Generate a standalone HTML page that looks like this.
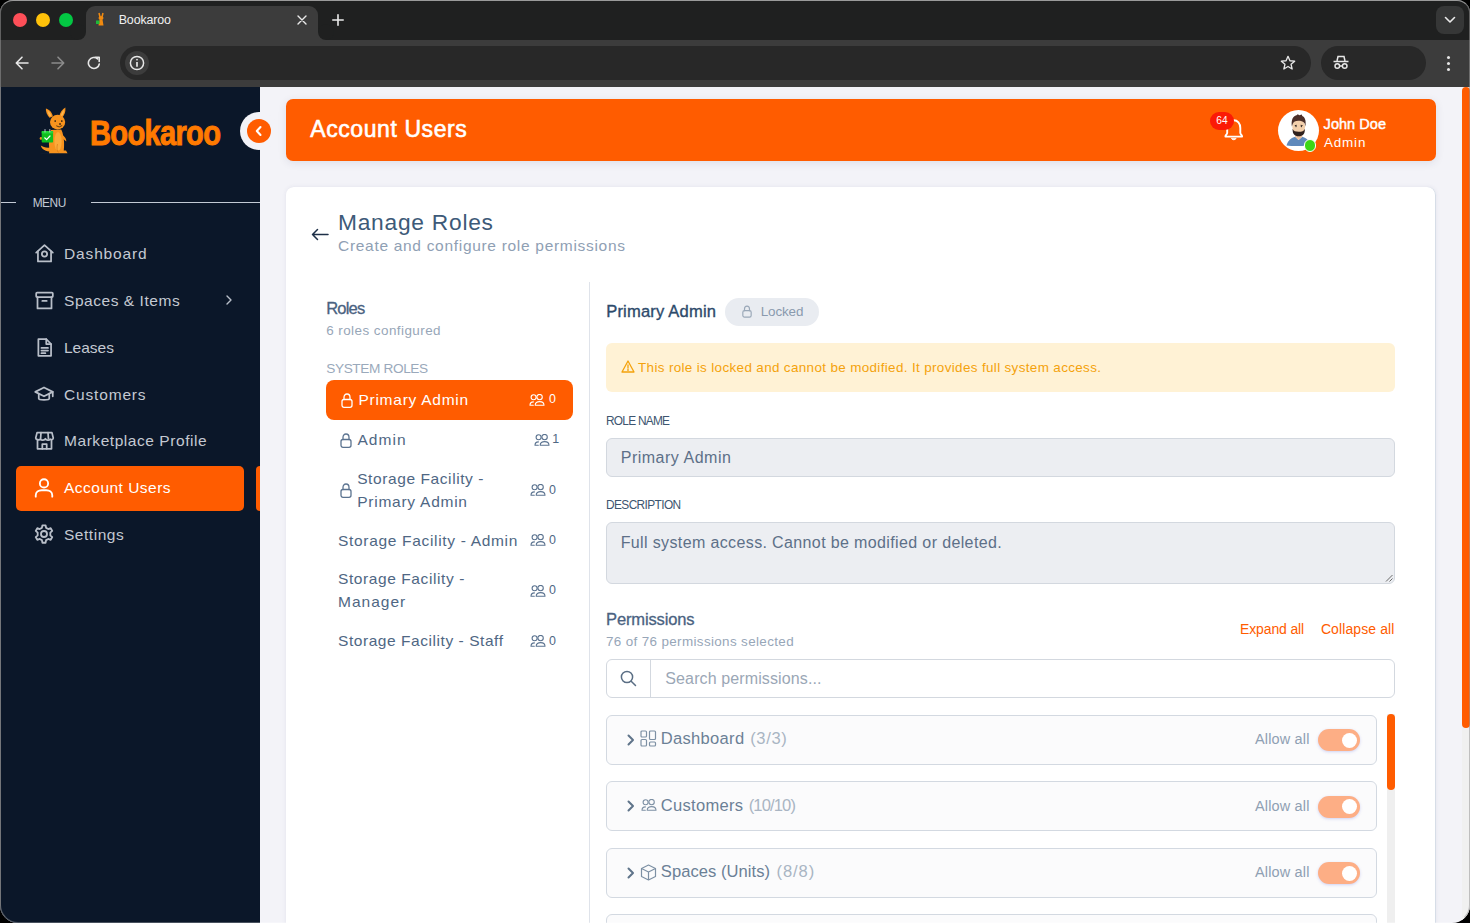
<!DOCTYPE html>
<html><head><meta charset="utf-8"><title>Bookaroo</title>
<style>
*{margin:0;padding:0;box-sizing:border-box}
html,body{width:1470px;height:923px;overflow:hidden;background:#000;font-family:"Liberation Sans",sans-serif}
#win{position:absolute;left:0;top:0;width:1470px;height:923px;overflow:hidden;border-radius:13px 13px 18px 18px;background:#f3f3f8}
#frame{position:absolute;left:0;top:0;width:1470px;height:923px;border-radius:13px 13px 18px 18px;border:1px solid rgba(150,150,150,0.55);border-top-color:rgba(170,170,170,0.8);border-bottom-color:rgba(255,255,255,0.25);pointer-events:none}
.a{position:absolute}
.t{position:absolute;white-space:pre;font-family:"Liberation Sans",sans-serif}
</style></head><body><div id="win">
<!-- ===== browser chrome ===== -->
<div class="a" style="left:0;top:0;width:1470px;height:40px;background:#1f2020"></div>
<div class="a" style="left:0;top:0;width:1470px;height:1px;background:#5b5b5b"></div>
<div class="a" style="left:0;top:40px;width:1470px;height:47px;background:#3c3c3c"></div>
<div class="a" style="left:86px;top:6px;width:232px;height:35px;background:#3c3c3c;border-radius:9px 9px 0 0"></div>
<div class="a" style="left:78px;top:32px;width:8px;height:8px;background:#3c3c3c"></div>
<div class="a" style="left:70px;top:24px;width:16px;height:16px;background:#1f2020;border-radius:50%"></div>
<div class="a" style="left:318px;top:32px;width:8px;height:8px;background:#3c3c3c"></div>
<div class="a" style="left:318px;top:24px;width:16px;height:16px;background:#1f2020;border-radius:50%"></div>
<div class="a" style="left:13px;top:13px;width:14px;height:14px;border-radius:50%;background:#fe4f58"></div>
<div class="a" style="left:36px;top:13px;width:14px;height:14px;border-radius:50%;background:#ffc20a"></div>
<div class="a" style="left:59px;top:13px;width:14px;height:14px;border-radius:50%;background:#03c743"></div>
<!-- favicon -->
<svg class="a" style="left:95px;top:12px" width="12" height="15" viewBox="0 0 12 15"><path d="M4 1 L5 5 M8 1 L7 5" stroke="#f08a10" stroke-width="1.5"/><ellipse cx="6" cy="6" rx="2.5" ry="2" fill="#f08a10"/><path d="M4.5 7.5 L7.5 7.5 L8.5 13.5 L3.5 13.5 Z" fill="#f08a10"/><rect x="1" y="8.5" width="3.5" height="3.5" fill="#1eb83a"/></svg>
<svg class="a" style="left:297px;top:15px" width="10" height="10" viewBox="0 0 10 10" stroke="#eaeaea" stroke-width="1.4" stroke-linecap="round"><path d="M1 1 L9 9 M9 1 L1 9"/></svg>
<svg class="a" style="left:332px;top:14px" width="12" height="12" viewBox="0 0 12 12" stroke="#eaeaea" stroke-width="1.6" stroke-linecap="round"><path d="M6 0.8 V11.2 M0.8 6 H11.2"/></svg>
<div class="a" style="left:1436px;top:6px;width:28px;height:28px;border-radius:8px;background:#363737"></div>
<svg class="a" style="left:1444px;top:16px" width="12" height="8" viewBox="0 0 12 8" fill="none" stroke="#eaeaea" stroke-width="1.6" stroke-linecap="round" stroke-linejoin="round"><path d="M1.5 1.5 L6 6 L10.5 1.5"/></svg>
<!-- toolbar -->
<svg class="a" style="left:15px;top:56px" width="14" height="14" viewBox="0 0 14 14" fill="none" stroke="#e6e6e6" stroke-width="1.6" stroke-linecap="round" stroke-linejoin="round"><path d="M13 7 H1.5 M7 1.2 L1.3 7 L7 12.8"/></svg>
<svg class="a" style="left:51px;top:56px" width="14" height="14" viewBox="0 0 14 14" fill="none" stroke="#8a8a8a" stroke-width="1.6" stroke-linecap="round" stroke-linejoin="round"><path d="M1 7 H12.5 M7 1.2 L12.7 7 L7 12.8"/></svg>
<svg class="a" style="left:87px;top:56px" width="14" height="14" viewBox="0 0 14 14" fill="none" stroke="#e6e6e6" stroke-width="1.6" stroke-linecap="round" stroke-linejoin="round"><path d="M12.3 8 A5.5 5.5 0 1 1 10.6 2.9"/><path d="M8 1.3 H12.2 V5.5"/></svg>
<div class="a" style="left:120px;top:46px;width:1191px;height:34px;border-radius:17px;background:#282828"></div>
<div class="a" style="left:125px;top:50.5px;width:24px;height:24px;border-radius:50%;background:#3c3c3c"></div>
<svg class="a" style="left:129px;top:54.5px" width="16" height="16" viewBox="0 0 16 16" fill="none" stroke="#e6e6e6" stroke-width="1.5"><circle cx="8" cy="8" r="6.6"/><path d="M8 7 V11.8" stroke-width="1.7"/><circle cx="8" cy="4.7" r="0.5" fill="#e6e6e6" stroke-width="1"/></svg>
<svg class="a" style="left:1280px;top:55px" width="16" height="16" viewBox="0 0 24 24" fill="none" stroke="#e6e6e6" stroke-width="2" stroke-linejoin="round"><path d="M12 2 L14.9 8.6 L22 9.3 L16.6 14 L18.2 21 L12 17.3 L5.8 21 L7.4 14 L2 9.3 L9.1 8.6 Z"/></svg>
<div class="a" style="left:1321px;top:46px;width:105px;height:34px;border-radius:17px;background:#282828"></div>
<svg class="a" style="left:1333px;top:55px" width="16" height="15" viewBox="0 0 16 15" fill="none" stroke="#e6e6e6" stroke-width="1.5"><path d="M4 6 L5 1.5 H11 L12 6" fill="#282828"/><path d="M0.5 6.5 H15.5" stroke-width="1.6"/><circle cx="4.3" cy="11" r="2.3"/><circle cx="11.7" cy="11" r="2.3"/><path d="M6.6 11 H9.4"/></svg>
<div class="a" style="left:1446.5px;top:55.5px;width:3px;height:3px;border-radius:50%;background:#e6e6e6"></div>
<div class="a" style="left:1446.5px;top:61.5px;width:3px;height:3px;border-radius:50%;background:#e6e6e6"></div>
<div class="a" style="left:1446.5px;top:67.5px;width:3px;height:3px;border-radius:50%;background:#e6e6e6"></div>

<!-- ===== sidebar ===== -->
<div class="a" style="left:0;top:87px;width:260px;height:836px;background:#0b1729"></div>
<div class="a" style="left:0;top:87px;width:1px;height:836px;background:#4a4f58"></div>
<div class="a" style="left:1px;top:202px;width:15px;height:1px;background:#c3cad5"></div>
<div class="a" style="left:91px;top:202px;width:169px;height:1px;background:#c3cad5"></div>
<div class="a" style="left:16px;top:465.5px;width:228px;height:45px;border-radius:5px;background:#ff5c00"></div>
<div class="a" style="left:256px;top:465.5px;width:4px;height:45px;border-radius:4px 0 0 4px;background:#ff5c00"></div>

<svg class="a" style="left:34px;top:243px" width="21" height="21" viewBox="0 0 24 24" fill="none" stroke="#b9bfc9" stroke-width="2" stroke-linecap="round" stroke-linejoin="round"><path d="M2.5 11 L12 2.5 L21.5 11"/><path d="M4.5 9.5 V21 H19.5 V9.5"/><circle cx="12" cy="12.5" r="3"/></svg>
<svg class="a" style="left:34px;top:290px" width="21" height="21" viewBox="0 0 24 24" fill="none" stroke="#b9bfc9" stroke-width="2" stroke-linecap="round" stroke-linejoin="round"><rect x="2.5" y="3" width="19" height="5" rx="1"/><path d="M4 8 V21 H20 V8"/><path d="M9.5 12.5 H14.5"/></svg>
<svg class="a" style="left:226px;top:295px" width="6" height="10" viewBox="0 0 6 10" fill="none" stroke="#b9bfc9" stroke-width="1.4" stroke-linecap="round" stroke-linejoin="round"><path d="M1 1 L5 5 L1 9"/></svg>
<svg class="a" style="left:34px;top:337px" width="21" height="21" viewBox="0 0 24 24" fill="none" stroke="#b9bfc9" stroke-width="2" stroke-linecap="round" stroke-linejoin="round"><path d="M5 2.5 H14 L19.5 8 V21.5 H5 Z"/><path d="M14 2.5 V8 H19.5"/><path d="M8.5 12.5 H16 M8.5 15.5 H16 M8.5 18.5 H13"/></svg>
<svg class="a" style="left:33px;top:384px" width="22" height="21" viewBox="0 0 24 24" fill="none" stroke="#b9bfc9" stroke-width="2" stroke-linecap="round" stroke-linejoin="round"><path d="M12 4 L22 9 L12 14 L2 9 Z"/><path d="M6 11 V16.5 C6 18.5 18 18.5 18 16.5 V11"/><path d="M22 9 V14"/></svg>
<svg class="a" style="left:34px;top:430px" width="21" height="21" viewBox="0 0 24 24" fill="none" stroke="#b9bfc9" stroke-width="2" stroke-linecap="round" stroke-linejoin="round"><path d="M3.5 3 H20.5 L22 9 C22 11 19.5 11.5 18.5 10.5 C17.5 12 14 12 13 10 C12 12 8.5 12 7.5 10.5 C6 12 2 11 2 9 Z"/><path d="M4 11.5 V21.5 H20 V11.5"/><path d="M9.5 21.5 V16 H14.5 V21.5"/><path d="M8 3 L7.5 10 M16 3 L16.5 10"/></svg>
<svg class="a" style="left:33px;top:476px" width="22" height="23" viewBox="0 0 24 24" fill="none" stroke="#ffffff" stroke-width="2" stroke-linecap="round" stroke-linejoin="round"><circle cx="12" cy="7.5" r="4.5"/><path d="M3 22 V20.5 C3 17 6 15 9.5 15 H14.5 C18 15 21 17 21 20.5 V22"/></svg>
<svg class="a" style="left:33px;top:523px" width="22" height="22" viewBox="0 0 24 24" fill="none" stroke="#b9bfc9" stroke-width="2" stroke-linecap="round" stroke-linejoin="round"><path d="M10.3 2.5 H13.7 L14.3 5.3 L16.6 6.6 L19.3 5.7 L21 8.6 L18.9 10.5 V13.5 L21 15.4 L19.3 18.3 L16.6 17.4 L14.3 18.7 L13.7 21.5 H10.3 L9.7 18.7 L7.4 17.4 L4.7 18.3 L3 15.4 L5.1 13.5 V10.5 L3 8.6 L4.7 5.7 L7.4 6.6 L9.7 5.3 Z"/><circle cx="12" cy="12" r="3.3"/></svg>

<!-- logo -->
<svg class="a" style="left:38px;top:104px" width="32" height="52" viewBox="0 0 32 52">
<ellipse cx="17" cy="49.5" rx="15" ry="1" fill="#0d1a2e"/>
<path d="M7.9 4.5 C11.5 5.5 14.5 9 14.8 12.5 L11.5 13.8 C9 11 7.6 7.5 7.9 4.5 Z" fill="#f7931e"/>
<path d="M9.5 6.5 C11.5 8 13 10 13.2 12 L11.8 12.5 C10.5 10.5 9.6 8.5 9.5 6.5 Z" fill="#fdb850"/>
<path d="M27.4 3.5 C27.8 7.5 26.5 11 24.5 13.2 L21.3 12 C22 8.5 24.5 5 27.4 3.5 Z" fill="#f7931e"/>
<path d="M26.2 5.5 C26 8 25.2 10.5 24 12 L22.8 11.5 C23.5 9 24.5 7 26.2 5.5 Z" fill="#fdb850"/>
<path d="M13 26 C10.2 32 10.6 43 12 48.5 L25.5 48.5 C26.5 42 26.5 32 23.2 25.5 Z" fill="#f7931e"/>
<ellipse cx="20" cy="37.5" rx="3.6" ry="9.5" fill="#fcab3a"/>
<ellipse cx="19.6" cy="18.1" rx="7.6" ry="7.3" fill="#f7931e"/>
<path d="M24.5 31 C27 33 28.5 35 28.3 37.5 C27 36.5 25.5 35 24 33.8 Z" fill="#f7931e"/>
<path d="M12.5 43.5 C8 44 5 43 2.8 41.5 C3.8 45.5 8 47.5 13 47.8 Z" fill="#f7931e"/>
<path d="M11.5 46.5 H20.5 L22 49.3 H11 Z M20.5 46.5 H28 L29.5 49.3 H20 Z" fill="#f7931e"/>
<path d="M19.5 40 C18.5 44 19 47 20.5 48.5" stroke="#c86a10" stroke-width="0.5" fill="none"/>
<circle cx="17.2" cy="17" r="0.85" fill="#1a1410"/><circle cx="23.8" cy="17" r="0.85" fill="#1a1410"/>
<ellipse cx="22" cy="20" rx="1.1" ry="0.8" fill="#1a1410"/>
<path d="M18.3 21.8 Q21 24.2 24.2 21.5" stroke="#1a1410" stroke-width="0.7" fill="none"/>
<circle cx="3" cy="34.4" r="1.3" fill="#f7931e"/>
<rect x="3.7" y="27" width="11.4" height="11.6" rx="0.8" fill="#0fbf1f"/>
<rect x="3.7" y="27" width="11.4" height="2.6" rx="0.8" fill="#22d43a"/>
<path d="M7 25.5 V28 M11.8 25.5 V28" stroke="#c8d0d8" stroke-width="0.9" stroke-linecap="round"/>
<path d="M6.7 33.8 L8.6 35.6 L12 32" stroke="#fff" stroke-width="1.2" fill="none" stroke-linecap="round" stroke-linejoin="round"/>
</svg>
<div class="t" style="left:89.5px;top:113.4px;font-size:35px;line-height:40px;font-weight:700;color:#ff7a00;letter-spacing:-0.8px;transform-origin:0 0;transform:scaleX(0.83);-webkit-text-stroke:1px #ff7a00">Bookaroo</div>

<!-- ===== header ===== -->
<div class="a" style="left:286px;top:99px;width:1150px;height:61.5px;border-radius:7px;background:#ff5c00;box-shadow:0 2px 8px rgba(40,50,90,0.10)"></div>
<svg class="a" style="left:1222px;top:116px" width="24" height="25" viewBox="0 0 24 25" fill="none" stroke="#fff" stroke-width="1.9" stroke-linejoin="round"><path d="M3.4 20.6 H20.1 C20.1 19 18.4 18.5 18.3 17 V12 C18.3 7.5 15.5 4.3 11.75 4.3 C8 4.3 5.2 7.5 5.2 12 V17 C5.1 18.5 3.4 19 3.4 20.6 Z"/><path d="M9.4 22.4 C10 24.2 13.5 24.2 14.1 22.4 Z" fill="#fff" stroke-width="0.8"/></svg>
<div class="a" style="left:1210px;top:112px;width:24px;height:18px;border-radius:9px;background:#fb1a06"></div>
<div class="a" style="left:1278px;top:110px;width:41px;height:41px;border-radius:50%;background:#fff"></div>
<svg class="a" style="left:1281px;top:113px" width="35" height="35" viewBox="0 0 35 35">
<path d="M5.5 32.5 C7 27.5 10.5 24.8 14.2 23.8 L17.6 27 L21.2 23.8 C25 24.8 28 27 29 30.5 C27 32.8 22.5 33 17.5 33 C12 33 8 33 5.5 32.5 Z" fill="#5f89bb"/>
<path d="M14.2 19.5 H21.2 V24 L17.6 27 L14.2 24 Z" fill="#ebbf9c"/>
<ellipse cx="17.7" cy="13.8" rx="6.4" ry="7.6" fill="#f3cfab"/>
<path d="M10.9 13.5 C10 7.5 11.8 3 15.5 2.3 L16.8 1.2 L18.3 2.3 L20.8 1.6 L21.3 3 C24 4 25.2 7.5 24.5 13.5 L23.6 10.2 C22.2 8.3 19.5 7.8 17.3 7.8 C14.3 7.8 12.6 8.8 11.8 10.8 Z" fill="#4b2f29"/>
<path d="M11.6 15.8 C11.4 21.2 13.6 23.3 17.7 23.3 C21.9 23.3 24 21.2 23.9 15.8 C23 18.3 21 18.8 17.7 18.8 C14.5 18.8 12.5 18.2 11.6 15.8 Z" fill="#2f201c"/>
<path d="M13.8 12.6 L15.8 12.3 M19.6 12.3 L21.6 12.6" stroke="#2a1e1a" stroke-width="0.9"/>
<circle cx="15" cy="13.6" r="0.7" fill="#222"/><circle cx="20.4" cy="13.6" r="0.7" fill="#222"/>
</svg>
<div class="a" style="left:1304px;top:139.4px;width:12.4px;height:12.4px;border-radius:50%;background:#3bd714;border:1.8px solid #fff"></div>

<!-- collapse button -->
<div class="a" style="left:240px;top:112px;width:38px;height:38px;border-radius:50%;background:#f3f3f8"></div>
<div class="a" style="left:247px;top:119px;width:24px;height:24px;border-radius:50%;background:#ff5c00"></div>
<svg class="a" style="left:253.5px;top:125px" width="10" height="12" viewBox="0 0 10 12" fill="none" stroke="#fff" stroke-width="2.1" stroke-linecap="round" stroke-linejoin="round"><path d="M6.5 2 L2.8 6 L6.5 10"/></svg>

<!-- ===== card ===== -->
<div class="a" style="left:286px;top:187px;width:1150px;height:760px;border-radius:8px;background:#fff;box-shadow:inset -1px 0 0 #d6dde7, 0 0 4px rgba(50,60,110,0.09)"></div>
<svg class="a" style="left:311px;top:228px" width="18" height="13" viewBox="0 0 18 13" fill="none" stroke="#1e3048" stroke-width="1.5" stroke-linecap="round" stroke-linejoin="round"><path d="M17 6.5 H1.5 M6.5 1.5 L1.5 6.5 L6.5 11.5"/></svg>
<div class="a" style="left:589px;top:282px;width:1px;height:641px;background:#dfe3ea"></div>

<!-- roles list -->
<div class="a" style="left:326px;top:380px;width:247px;height:40px;border-radius:8px;background:#ff5c00"></div>
<svg class="a" style="left:340.5px;top:392.5px" width="12" height="15" viewBox="0 0 12 15" fill="none" stroke="#ffffff" stroke-width="1.3" stroke-linecap="round" stroke-linejoin="round"><rect x="1" y="6.5" width="10" height="7.8" rx="2"/><path d="M3 6.5 V4.5 C3 2.5 4.3 1 6 1 C7.7 1 9 2.5 9 4.5 V6.5"/></svg>
<svg class="a" style="left:528.6px;top:394px" width="16" height="12" viewBox="0 0 16 12" fill="none" stroke="#ffffff" stroke-width="1.1" stroke-linecap="round" stroke-linejoin="round"><circle cx="4.6" cy="3.3" r="2.5"/><circle cx="10.6" cy="3.1" r="2.7"/><path d="M6.2 11.3 C6.2 8.6 8 7.6 10.6 7.6 C13.2 7.6 15 8.6 15 11.3 Z"/><path d="M1 11.3 C1 9.2 2.2 8 4.4 7.9 M1 11.3 H4.3"/></svg>
<svg class="a" style="left:340px;top:432.5px" width="12" height="15" viewBox="0 0 12 15" fill="none" stroke="#5b7390" stroke-width="1.3" stroke-linecap="round" stroke-linejoin="round"><rect x="1" y="6.5" width="10" height="7.8" rx="2"/><path d="M3 6.5 V4.5 C3 2.5 4.3 1 6 1 C7.7 1 9 2.5 9 4.5 V6.5"/></svg>
<svg class="a" style="left:533.6px;top:434px" width="16" height="12" viewBox="0 0 16 12" fill="none" stroke="#5b7390" stroke-width="1.1" stroke-linecap="round" stroke-linejoin="round"><circle cx="4.6" cy="3.3" r="2.5"/><circle cx="10.6" cy="3.1" r="2.7"/><path d="M6.2 11.3 C6.2 8.6 8 7.6 10.6 7.6 C13.2 7.6 15 8.6 15 11.3 Z"/><path d="M1 11.3 C1 9.2 2.2 8 4.4 7.9 M1 11.3 H4.3"/></svg>
<svg class="a" style="left:339.5px;top:482.5px" width="12" height="15" viewBox="0 0 12 15" fill="none" stroke="#5b7390" stroke-width="1.3" stroke-linecap="round" stroke-linejoin="round"><rect x="1" y="6.5" width="10" height="7.8" rx="2"/><path d="M3 6.5 V4.5 C3 2.5 4.3 1 6 1 C7.7 1 9 2.5 9 4.5 V6.5"/></svg>
<svg class="a" style="left:530px;top:484px" width="16" height="12" viewBox="0 0 16 12" fill="none" stroke="#5b7390" stroke-width="1.1" stroke-linecap="round" stroke-linejoin="round"><circle cx="4.6" cy="3.3" r="2.5"/><circle cx="10.6" cy="3.1" r="2.7"/><path d="M6.2 11.3 C6.2 8.6 8 7.6 10.6 7.6 C13.2 7.6 15 8.6 15 11.3 Z"/><path d="M1 11.3 C1 9.2 2.2 8 4.4 7.9 M1 11.3 H4.3"/></svg>
<svg class="a" style="left:530px;top:534px" width="16" height="12" viewBox="0 0 16 12" fill="none" stroke="#5b7390" stroke-width="1.1" stroke-linecap="round" stroke-linejoin="round"><circle cx="4.6" cy="3.3" r="2.5"/><circle cx="10.6" cy="3.1" r="2.7"/><path d="M6.2 11.3 C6.2 8.6 8 7.6 10.6 7.6 C13.2 7.6 15 8.6 15 11.3 Z"/><path d="M1 11.3 C1 9.2 2.2 8 4.4 7.9 M1 11.3 H4.3"/></svg>
<svg class="a" style="left:530px;top:584.5px" width="16" height="12" viewBox="0 0 16 12" fill="none" stroke="#5b7390" stroke-width="1.1" stroke-linecap="round" stroke-linejoin="round"><circle cx="4.6" cy="3.3" r="2.5"/><circle cx="10.6" cy="3.1" r="2.7"/><path d="M6.2 11.3 C6.2 8.6 8 7.6 10.6 7.6 C13.2 7.6 15 8.6 15 11.3 Z"/><path d="M1 11.3 C1 9.2 2.2 8 4.4 7.9 M1 11.3 H4.3"/></svg>
<svg class="a" style="left:530px;top:635px" width="16" height="12" viewBox="0 0 16 12" fill="none" stroke="#5b7390" stroke-width="1.1" stroke-linecap="round" stroke-linejoin="round"><circle cx="4.6" cy="3.3" r="2.5"/><circle cx="10.6" cy="3.1" r="2.7"/><path d="M6.2 11.3 C6.2 8.6 8 7.6 10.6 7.6 C13.2 7.6 15 8.6 15 11.3 Z"/><path d="M1 11.3 C1 9.2 2.2 8 4.4 7.9 M1 11.3 H4.3"/></svg>

<!-- right panel -->
<div class="a" style="left:725px;top:298px;width:94px;height:28px;border-radius:14px;background:#e9ecf1"></div>
<svg class="a" style="left:741.5px;top:304.5px" width="10" height="13" viewBox="0 0 12 15" fill="none" stroke="#9aa8b8" stroke-width="1.4" stroke-linecap="round" stroke-linejoin="round"><rect x="1" y="6.5" width="10" height="7.8" rx="2"/><path d="M3 6.5 V4.5 C3 2.5 4.3 1 6 1 C7.7 1 9 2.5 9 4.5 V6.5"/></svg>
<div class="a" style="left:606px;top:343px;width:789px;height:49px;border-radius:6px;background:#fff2d5"></div>
<svg class="a" style="left:620.5px;top:360px" width="14" height="13" viewBox="0 0 14 13" fill="none" stroke="#f4a20c" stroke-width="1.3" stroke-linejoin="round" stroke-linecap="round"><path d="M7 1 L13 12 H1 Z"/><path d="M7 5 V8.2"/><circle cx="7" cy="10" r="0.3" fill="#f4a20c"/></svg>
<div class="a" style="left:606px;top:437.5px;width:789px;height:39px;border-radius:6px;background:#eceef2;border:1px solid #d3d8df"></div>
<div class="a" style="left:606px;top:522px;width:789px;height:62px;border-radius:6px;background:#eceef2;border:1px solid #d3d8df"></div>
<svg class="a" style="left:1385px;top:574px" width="8" height="8" viewBox="0 0 8 8" stroke="#6a6a6a" stroke-width="1"><path d="M7.5 1 L1 7.5 M7.5 4.5 L4.5 7.5"/></svg>
<div class="a" style="left:606px;top:659px;width:789px;height:38.5px;border-radius:6px;background:#fff;border:1px solid #d3d8df"></div>
<div class="a" style="left:650px;top:660px;width:1px;height:36.5px;background:#d3d8df"></div>
<svg class="a" style="left:620px;top:670px" width="17" height="17" viewBox="0 0 17 17" fill="none" stroke="#5a6e84" stroke-width="1.5" stroke-linecap="round"><circle cx="7" cy="7" r="5.6"/><path d="M11.2 11.2 L15.5 15.5"/></svg>
<div class="a" style="left:606px;top:714.5px;width:771px;height:50px;border-radius:6px;background:#fbfbfc;border:1px solid #d3d9e1"></div><svg class="a" style="left:626px;top:732.5px" width="10" height="14" viewBox="0 0 10 14" fill="none" stroke="#5f748a" stroke-width="2" stroke-linecap="round" stroke-linejoin="round"><path d="M2.5 2.5 L7 7 L2.5 11.5"/></svg><div class="a" style="left:1318px;top:729.1px;width:42px;height:22px;border-radius:11px;background:#fdae85;box-shadow:0 1px 3px rgba(80,90,220,0.25)"></div><div class="a" style="left:1341.5px;top:732.9px;width:15px;height:15px;border-radius:50%;background:#fff"></div>
<div class="a" style="left:606px;top:781px;width:771px;height:50px;border-radius:6px;background:#fbfbfc;border:1px solid #d3d9e1"></div><svg class="a" style="left:626px;top:799px" width="10" height="14" viewBox="0 0 10 14" fill="none" stroke="#5f748a" stroke-width="2" stroke-linecap="round" stroke-linejoin="round"><path d="M2.5 2.5 L7 7 L2.5 11.5"/></svg><div class="a" style="left:1318px;top:795.6px;width:42px;height:22px;border-radius:11px;background:#fdae85;box-shadow:0 1px 3px rgba(80,90,220,0.25)"></div><div class="a" style="left:1341.5px;top:799.4px;width:15px;height:15px;border-radius:50%;background:#fff"></div>
<div class="a" style="left:606px;top:847.5px;width:771px;height:50px;border-radius:6px;background:#fbfbfc;border:1px solid #d3d9e1"></div><svg class="a" style="left:626px;top:865.5px" width="10" height="14" viewBox="0 0 10 14" fill="none" stroke="#5f748a" stroke-width="2" stroke-linecap="round" stroke-linejoin="round"><path d="M2.5 2.5 L7 7 L2.5 11.5"/></svg><div class="a" style="left:1318px;top:862.1px;width:42px;height:22px;border-radius:11px;background:#fdae85;box-shadow:0 1px 3px rgba(80,90,220,0.25)"></div><div class="a" style="left:1341.5px;top:865.9px;width:15px;height:15px;border-radius:50%;background:#fff"></div>
<div class="a" style="left:606px;top:914px;width:771px;height:50px;border-radius:6px;background:#fbfbfc;border:1px solid #d3d9e1"></div><svg class="a" style="left:626px;top:932px" width="10" height="14" viewBox="0 0 10 14" fill="none" stroke="#5f748a" stroke-width="2" stroke-linecap="round" stroke-linejoin="round"><path d="M2.5 2.5 L7 7 L2.5 11.5"/></svg><div class="a" style="left:1318px;top:928.6px;width:42px;height:22px;border-radius:11px;background:#fdae85;box-shadow:0 1px 3px rgba(80,90,220,0.25)"></div><div class="a" style="left:1341.5px;top:932.4px;width:15px;height:15px;border-radius:50%;background:#fff"></div>
<svg class="a" style="left:640px;top:730px" width="17" height="17" viewBox="0 0 17 17" fill="none" stroke="#7d90a4" stroke-width="1.2"><rect x="1" y="1" width="5.5" height="6" rx="1"/><rect x="1" y="9.5" width="5.5" height="6.5" rx="1"/><rect x="9.5" y="1" width="6" height="8.5" rx="1"/><rect x="9.5" y="12" width="6" height="4" rx="1"/></svg>
<svg class="a" style="left:640.5px;top:799px" width="16" height="12" viewBox="0 0 16 12" fill="none" stroke="#7d90a4" stroke-width="1.1" stroke-linecap="round" stroke-linejoin="round"><circle cx="4.6" cy="3.3" r="2.5"/><circle cx="10.6" cy="3.1" r="2.7"/><path d="M6.2 11.3 C6.2 8.6 8 7.6 10.6 7.6 C13.2 7.6 15 8.6 15 11.3 Z"/><path d="M1 11.3 C1 9.2 2.2 8 4.4 7.9 M1 11.3 H4.3"/></svg>
<svg class="a" style="left:640px;top:864px" width="17" height="17" viewBox="0 0 17 17" fill="none" stroke="#7d90a4" stroke-width="1.2" stroke-linejoin="round"><path d="M8.5 1 L15.5 4.5 V12.5 L8.5 16 L1.5 12.5 V4.5 Z"/><path d="M1.5 4.5 L8.5 8 L15.5 4.5 M8.5 8 V16"/></svg>

<!-- inner scrollbar -->
<div class="a" style="left:1387px;top:714px;width:8px;height:209px;background:#efefef"></div>
<div class="a" style="left:1387px;top:714px;width:8px;height:76px;border-radius:4px;background:#ff5c00"></div>
<!-- page scrollbar -->
<div class="a" style="left:1462px;top:87px;width:8px;height:836px;background:#f0f0f0"></div>
<div class="a" style="left:1462px;top:87px;width:8px;height:641px;border-radius:4px;background:#ff5c00"></div>
<div class="t" style="left:118.7px;top:13.69px;font-size:12.42px;line-height:12.42px;font-weight:400;color:#f0f0f0;letter-spacing:-0.116px;">Bookaroo</div>
<div class="t" style="left:32.7px;top:197.63px;font-size:11.9px;line-height:11.9px;font-weight:400;color:#c3cad5;letter-spacing:-0.472px;">MENU</div>
<div class="t" style="left:64.0px;top:245.86px;font-size:15.52px;line-height:15.52px;font-weight:400;color:#c4c9d2;letter-spacing:0.849px;">Dashboard</div>
<div class="t" style="left:64.0px;top:292.86px;font-size:15.52px;line-height:15.52px;font-weight:400;color:#c4c9d2;letter-spacing:0.542px;">Spaces &amp; Items</div>
<div class="t" style="left:64.0px;top:339.96px;font-size:15.52px;line-height:15.52px;font-weight:400;color:#c4c9d2;letter-spacing:-0.009px;">Leases</div>
<div class="t" style="left:64.0px;top:386.76px;font-size:15.52px;line-height:15.52px;font-weight:400;color:#c4c9d2;letter-spacing:0.823px;">Customers</div>
<div class="t" style="left:64.0px;top:433.26px;font-size:15.52px;line-height:15.52px;font-weight:400;color:#c4c9d2;letter-spacing:0.544px;">Marketplace Profile</div>
<div class="t" style="left:64.0px;top:480.16px;font-size:15.52px;line-height:15.52px;font-weight:400;color:#ffffff;letter-spacing:0.476px;">Account Users</div>
<div class="t" style="left:64.0px;top:526.66px;font-size:15.52px;line-height:15.52px;font-weight:400;color:#c4c9d2;letter-spacing:0.520px;">Settings</div>
<div class="t" style="left:310.3px;top:117.93px;font-size:23px;line-height:23px;font-weight:400;color:#ffffff;letter-spacing:0.578px;-webkit-text-stroke:0.6px #ffffff">Account Users</div>
<div class="t" style="left:1323.6px;top:117.03px;font-size:14.49px;line-height:14.49px;font-weight:400;color:#ffffff;letter-spacing:0.055px;-webkit-text-stroke:0.45px #ffffff">John Doe</div>
<div class="t" style="left:1324.0px;top:135.71px;font-size:13.45px;line-height:13.45px;font-weight:400;color:#ffffff;letter-spacing:0.827px;">Admin</div>
<div class="t" style="left:1216.2px;top:116.17px;font-size:10.2px;line-height:10.2px;font-weight:400;color:#ffffff;letter-spacing:0.056px;">64</div>
<div class="t" style="left:338.0px;top:211.13px;font-size:22.77px;line-height:22.77px;font-weight:400;color:#3d5a78;letter-spacing:0.744px;">Manage Roles</div>
<div class="t" style="left:338.0px;top:238.06px;font-size:15.52px;line-height:15.52px;font-weight:400;color:#8fa0b4;letter-spacing:0.689px;">Create and configure role permissions</div>
<div class="t" style="left:326.2px;top:300.78px;font-size:16.56px;line-height:16.56px;font-weight:400;color:#4a6281;letter-spacing:-0.828px;-webkit-text-stroke:0.3px #4a6281">Roles</div>
<div class="t" style="left:326.2px;top:323.91px;font-size:13.45px;line-height:13.45px;font-weight:400;color:#97a6b8;letter-spacing:0.445px;">6 roles configured</div>
<div class="t" style="left:326.2px;top:361.84px;font-size:13.66px;line-height:13.66px;font-weight:400;color:#9aa9bb;letter-spacing:-0.386px;">SYSTEM ROLES</div>
<div class="t" style="left:358.4px;top:391.86px;font-size:15.52px;line-height:15.52px;font-weight:400;color:#ffffff;letter-spacing:0.744px;">Primary Admin</div>
<div class="t" style="left:549.0px;top:393.39px;font-size:12.42px;line-height:12.42px;font-weight:400;color:#ffffff;letter-spacing:0.000px;">0</div>
<div class="t" style="left:357.4px;top:432.16px;font-size:15.52px;line-height:15.52px;font-weight:400;color:#4f6784;letter-spacing:1.054px;">Admin</div>
<div class="t" style="left:552.3px;top:433.39px;font-size:12.42px;line-height:12.42px;font-weight:400;color:#4f6784;letter-spacing:0.000px;">1</div>
<div class="t" style="left:357.2px;top:471.16px;font-size:15.52px;line-height:15.52px;font-weight:400;color:#4f6784;letter-spacing:0.582px;">Storage Facility -</div>
<div class="t" style="left:357.2px;top:494.06px;font-size:15.52px;line-height:15.52px;font-weight:400;color:#4f6784;letter-spacing:0.744px;">Primary Admin</div>
<div class="t" style="left:549.0px;top:483.99px;font-size:12.42px;line-height:12.42px;font-weight:400;color:#4f6784;letter-spacing:0.000px;">0</div>
<div class="t" style="left:338.0px;top:532.66px;font-size:15.52px;line-height:15.52px;font-weight:400;color:#4f6784;letter-spacing:0.672px;">Storage Facility - Admin</div>
<div class="t" style="left:549.0px;top:533.99px;font-size:12.42px;line-height:12.42px;font-weight:400;color:#4f6784;letter-spacing:0.000px;">0</div>
<div class="t" style="left:338.0px;top:571.26px;font-size:15.52px;line-height:15.52px;font-weight:400;color:#4f6784;letter-spacing:0.582px;">Storage Facility -</div>
<div class="t" style="left:338.0px;top:593.86px;font-size:15.52px;line-height:15.52px;font-weight:400;color:#4f6784;letter-spacing:1.008px;">Manager</div>
<div class="t" style="left:549.0px;top:584.49px;font-size:12.42px;line-height:12.42px;font-weight:400;color:#4f6784;letter-spacing:0.000px;">0</div>
<div class="t" style="left:338.0px;top:633.16px;font-size:15.52px;line-height:15.52px;font-weight:400;color:#4f6784;letter-spacing:0.550px;">Storage Facility - Staff</div>
<div class="t" style="left:549.0px;top:634.79px;font-size:12.42px;line-height:12.42px;font-weight:400;color:#4f6784;letter-spacing:0.000px;">0</div>
<div class="t" style="left:606.2px;top:304.18px;font-size:16.56px;line-height:16.56px;font-weight:400;color:#2d4a6b;letter-spacing:0.184px;-webkit-text-stroke:0.35px #2d4a6b">Primary Admin</div>
<div class="t" style="left:760.7px;top:304.91px;font-size:13.45px;line-height:13.45px;font-weight:400;color:#8a9aae;letter-spacing:-0.129px;">Locked</div>
<div class="t" style="left:638.0px;top:360.61px;font-size:13.45px;line-height:13.45px;font-weight:400;color:#f4a20c;letter-spacing:0.352px;">This role is locked and cannot be modified. It provides full system access.</div>
<div class="t" style="left:606.0px;top:415.93px;font-size:11.9px;line-height:11.9px;font-weight:400;color:#3d5570;letter-spacing:-0.756px;">ROLE NAME</div>
<div class="t" style="left:620.7px;top:449.12px;font-size:16.04px;line-height:16.04px;font-weight:400;color:#5d7088;letter-spacing:0.497px;">Primary Admin</div>
<div class="t" style="left:606.0px;top:500.33px;font-size:11.9px;line-height:11.9px;font-weight:400;color:#3d5570;letter-spacing:-0.607px;">DESCRIPTION</div>
<div class="t" style="left:620.7px;top:534.22px;font-size:16.04px;line-height:16.04px;font-weight:400;color:#5d7088;letter-spacing:0.356px;">Full system access. Cannot be modified or deleted.</div>
<div class="t" style="left:606.0px;top:611.58px;font-size:16.56px;line-height:16.56px;font-weight:400;color:#4a6281;letter-spacing:-0.153px;-webkit-text-stroke:0.3px #4a6281">Permissions</div>
<div class="t" style="left:606.0px;top:634.61px;font-size:13.45px;line-height:13.45px;font-weight:400;color:#97a6b8;letter-spacing:0.351px;">76 of 76 permissions selected</div>
<div class="t" style="left:1240.0px;top:622.57px;font-size:13.97px;line-height:13.97px;font-weight:400;color:#ff5c00;letter-spacing:-0.115px;">Expand all</div>
<div class="t" style="left:1320.9px;top:622.57px;font-size:13.97px;line-height:13.97px;font-weight:400;color:#ff5c00;letter-spacing:0.116px;">Collapse all</div>
<div class="t" style="left:665.3px;top:670.02px;font-size:16.04px;line-height:16.04px;font-weight:400;color:#9ba7b6;letter-spacing:0.103px;">Search permissions...</div>
<div class="t" style="left:660.8px;top:731.08px;font-size:16.56px;line-height:16.56px;font-weight:400;color:#6b8096;letter-spacing:0.293px;">Dashboard</div>
<div class="t" style="left:750.2px;top:731.08px;font-size:16.56px;line-height:16.56px;font-weight:400;color:#a9b5c3;letter-spacing:0.667px;">(3/3)</div>
<div class="t" style="left:1255.0px;top:732.33px;font-size:14.49px;line-height:14.49px;font-weight:400;color:#8fa0b3;letter-spacing:0.157px;">Allow all</div>
<div class="t" style="left:660.8px;top:797.68px;font-size:16.56px;line-height:16.56px;font-weight:400;color:#6b8096;letter-spacing:0.275px;">Customers</div>
<div class="t" style="left:748.7px;top:797.68px;font-size:16.56px;line-height:16.56px;font-weight:400;color:#a9b5c3;letter-spacing:-0.856px;">(10/10)</div>
<div class="t" style="left:1255.0px;top:798.93px;font-size:14.49px;line-height:14.49px;font-weight:400;color:#8fa0b3;letter-spacing:0.157px;">Allow all</div>
<div class="t" style="left:660.8px;top:864.08px;font-size:16.56px;line-height:16.56px;font-weight:400;color:#6b8096;letter-spacing:0.053px;">Spaces (Units)</div>
<div class="t" style="left:776.5px;top:864.08px;font-size:16.56px;line-height:16.56px;font-weight:400;color:#a9b5c3;letter-spacing:0.917px;">(8/8)</div>
<div class="t" style="left:1255.0px;top:865.33px;font-size:14.49px;line-height:14.49px;font-weight:400;color:#8fa0b3;letter-spacing:0.157px;">Allow all</div>
</div><div id="frame"></div>
</body></html>
